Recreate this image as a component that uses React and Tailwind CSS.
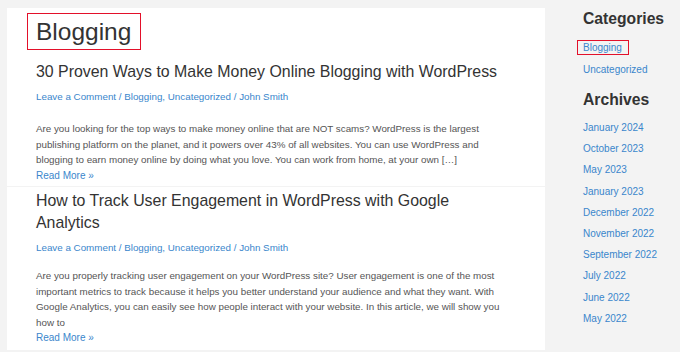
export default function App() {
  const archives = [
    "January 2024",
    "October 2023",
    "May 2023",
    "January 2023",
    "December 2022",
    "November 2022",
    "September 2022",
    "July 2022",
    "June 2022",
    "May 2022",
  ];
  const font = { fontFamily: "'Liberation Sans', Arial, sans-serif" };
  return (
    <div className="w-[680px] h-[352px] bg-[#f3f3f3] flex overflow-hidden" style={font}>
      <main className="ml-[7px] mt-[8px] w-[538px] flex flex-col gap-px">
        <article className="bg-white pl-[29px] pr-[20px] h-[178px]">
          <div className="pt-[5px]">
            <h1 className="inline-block border border-[#e3102a] pl-[8px] pr-[9px] h-[37px] leading-[35px] text-[24.5px] text-[#333] -ml-[9px]">
              Blogging
            </h1>
          </div>
          <h2 className="mt-[11px] text-[15.9px] leading-[22px] text-[#333] whitespace-nowrap">
            30 Proven Ways to Make Money Online Blogging with WordPress
          </h2>
          <p className="mt-[6px] text-[9.8px] leading-[16px] text-[#3a86cc]">
            Leave a Comment / Blogging, Uncategorized / John Smith
          </p>
          <p className="mt-[16px] text-[9.8px] leading-[15.5px] text-[#555] whitespace-nowrap">
            Are you looking for the top ways to make money online that are NOT scams? WordPress is the largest
            <br />
            publishing platform on the planet, and it powers over 43% of all websites. You can use WordPress and
            <br />
            blogging to earn money online by doing what you love. You can work from home, at your own […]
          </p>
          <p className="text-[10px] leading-[16px] text-[#3a86cc]">Read More »</p>
        </article>
        <article className="bg-white pl-[29px] pr-[20px] h-[163px]">
          <h2 className="pt-[3px] text-[15.9px] leading-[22px] text-[#333] whitespace-nowrap">
            How to Track User Engagement in WordPress with Google
            <br />
            Analytics
          </h2>
          <p className="mt-[6px] text-[9.8px] leading-[16px] text-[#3a86cc]">
            Leave a Comment / Blogging, Uncategorized / John Smith
          </p>
          <p className="mt-[12px] text-[9.8px] leading-[15.5px] text-[#555] whitespace-nowrap">
            Are you properly tracking user engagement on your WordPress site? User engagement is one of the most
            <br />
            important metrics to track because it helps you better understand your audience and what they want. With
            <br />
            Google Analytics, you can easily see how people interact with your website. In this article, we will show you
            <br />
            how to
          </p>
          <p className="text-[10px] leading-[16px] text-[#3a86cc]">Read More »</p>
        </article>
      </main>
      <aside className="ml-[38px] pt-[8px] flex flex-col">
        <h3 className="text-[15.7px] leading-[22px] font-bold text-[#333]">Categories</h3>
        <ul className="mt-[10px] text-[10px] text-[#3a86cc]">
          <li className="h-[21.5px] leading-[16px]">
            <span className="inline-block border border-[#e3102a] pl-[5px] pr-[6px] -ml-[6px] h-[15px] leading-[13px]">Blogging</span>
          </li>
          <li className="h-[21.5px] leading-[16px]">Uncategorized</li>
        </ul>
        <h3 className="mt-[6px] text-[15.7px] leading-[22px] font-bold text-[#333]">Archives</h3>
        <ul className="mt-[9px] text-[10px] text-[#3a86cc]">
          {archives.map((a) => (
            <li key={a} className="h-[21.2px] leading-[16px]">
              {a}
            </li>
          ))}
        </ul>
      </aside>
    </div>
  );
}
